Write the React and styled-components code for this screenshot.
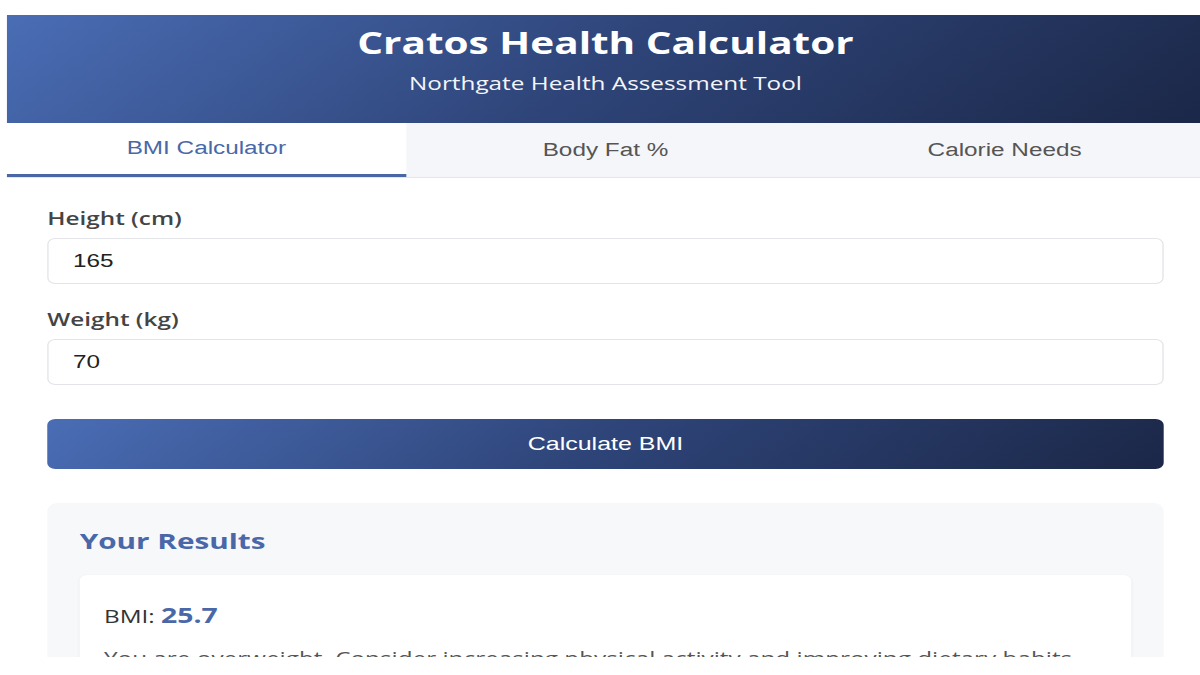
import React, { useState } from 'react'
import styled, { createGlobalStyle } from 'styled-components'

const GlobalStyle = createGlobalStyle`
  html, body {
    margin: 0;
    padding: 0;
    background: #ffffff;
    overflow: hidden;
  }
  * {
    box-sizing: border-box;
  }
`

const tabs = [
  { id: 'bmi', label: 'BMI Calculator' },
  { id: 'fat', label: 'Body Fat %' },
  { id: 'cal', label: 'Calorie Needs' },
]

function App() {
  const [active, setActive] = useState('bmi')
  const [height, setHeight] = useState('165')
  const [weight, setWeight] = useState('70')

  return (
    <>
      <GlobalStyle />
      <Stage>
        <Container>
          <Header>
            <Title>Cratos Health Calculator</Title>
            <Subtitle>Northgate Health Assessment Tool</Subtitle>
          </Header>

          <TabBar>
            {tabs.map((t) => (
              <Tab key={t.id} $active={active === t.id} onClick={() => setActive(t.id)}>
                {t.label}
              </Tab>
            ))}
          </TabBar>

          <Content>
            <FormGroup>
              <Label htmlFor="height">Height (cm)</Label>
              <Input id="height" value={height} onChange={(e) => setHeight(e.target.value)} />
            </FormGroup>
            <FormGroup>
              <Label htmlFor="weight">Weight (kg)</Label>
              <Input id="weight" value={weight} onChange={(e) => setWeight(e.target.value)} />
            </FormGroup>

            <Button>Calculate BMI</Button>

            <Results>
              <ResultsTitle>Your Results</ResultsTitle>
              <ResultCard>
                <BmiLine>
                  BMI: <BmiValue>25.7</BmiValue>
                </BmiLine>
                <Advice>
                  You are overweight. Consider increasing physical activity and improving dietary habits.
                </Advice>
              </ResultCard>
            </Results>
          </Content>
        </Container>
      </Stage>
    </>
  )
}

export default App

// the reference page is drawn wide: render at 889px and stretch to the window
const Stage = styled.div`
  width: 889px;
  height: 675px;
  padding-top: 15px;
  transform: scaleX(1.35);
  transform-origin: 0 0;
`

const Container = styled.div`
  margin-left: 5px;
  width: 887px;
  height: 642px;
  overflow: hidden;
  background: #ffffff;
`

const Header = styled.header`
  background: linear-gradient(135deg, #4a6db5 0%, #2e4478 50%, #1b2747 100%);
  color: #ffffff;
  text-align: center;
  height: 108px;
  padding-top: 10px;
  font-family: 'Open Sans', 'Noto Sans', sans-serif;
`

const Title = styled.h1`
  margin: 0;
  font-size: 30px;
  line-height: 36px;
  font-weight: 700;
`

const Subtitle = styled.p`
  margin: 10px 0 0;
  font-size: 18px;
  line-height: 24px;
  font-weight: 400;
  opacity: 0.95;
`

const TabBar = styled.div`
  display: grid;
  grid-template-columns: repeat(3, 1fr);
  background: #f5f6f9;
  border-bottom: 1px solid #e4e6eb;
`

const Tab = styled.button`
  height: 54px;
  border: none;
  border-bottom: ${(p) => (p.$active ? '3px solid #4a66a6' : 'none')};
  background: ${(p) => (p.$active ? '#ffffff' : 'transparent')};
  color: ${(p) => (p.$active ? '#4a68a8' : '#555555')};
  font-family: 'Liberation Sans', Arial, sans-serif;
  font-size: 18px;
  cursor: pointer;
  padding: 0;
`

const Content = styled.div`
  padding: 28px 30px 0;
`

const FormGroup = styled.div`
  margin-bottom: 23px;
`

const Label = styled.label`
  display: block;
  margin-bottom: 8px;
  font-family: 'Open Sans', 'Noto Sans', sans-serif;
  font-size: 18px;
  line-height: 24px;
  font-weight: 600;
  color: #444444;
`

const Input = styled.input`
  display: block;
  width: 100%;
  height: 46px;
  padding: 0 18px;
  border: 1px solid #e2e4e8;
  border-radius: 6px;
  font-family: 'Liberation Sans', Arial, sans-serif;
  font-size: 18px;
  color: #222222;
  background: #ffffff;
  outline: none;
`

const Button = styled.button`
  display: block;
  width: 100%;
  height: 50px;
  margin-top: 34px;
  border: none;
  border-radius: 6px;
  background: linear-gradient(135deg, #4a6db5 0%, #2e4478 50%, #1b2747 100%);
  color: #ffffff;
  font-family: 'Liberation Sans', Arial, sans-serif;
  font-size: 18.5px;
  cursor: pointer;
`

const Results = styled.section`
  margin-top: 34px;
  padding: 22px 24px 24px;
  background: #f7f8fa;
  border-radius: 8px;
`

const ResultsTitle = styled.h2`
  margin: 0 0 20px;
  font-family: 'Open Sans', 'Noto Sans', sans-serif;
  font-size: 22px;
  line-height: 30px;
  font-weight: 700;
  color: #4a68a8;
`

const ResultCard = styled.div`
  background: #ffffff;
  border-radius: 6px;
  padding: 26px 18px 20px;
  box-shadow: 0 1px 3px rgba(0, 0, 0, 0.05);
  font-family: 'Open Sans', 'Noto Sans', sans-serif;
`

const BmiLine = styled.p`
  margin: 0 0 15px;
  font-size: 18px;
  line-height: 28px;
  color: #333333;
`

const BmiValue = styled.span`
  font-size: 21px;
  font-weight: 700;
  color: #4a68a8;
`

const Advice = styled.p`
  margin: 0;
  font-size: 18px;
  line-height: 26px;
  color: #555555;
`
